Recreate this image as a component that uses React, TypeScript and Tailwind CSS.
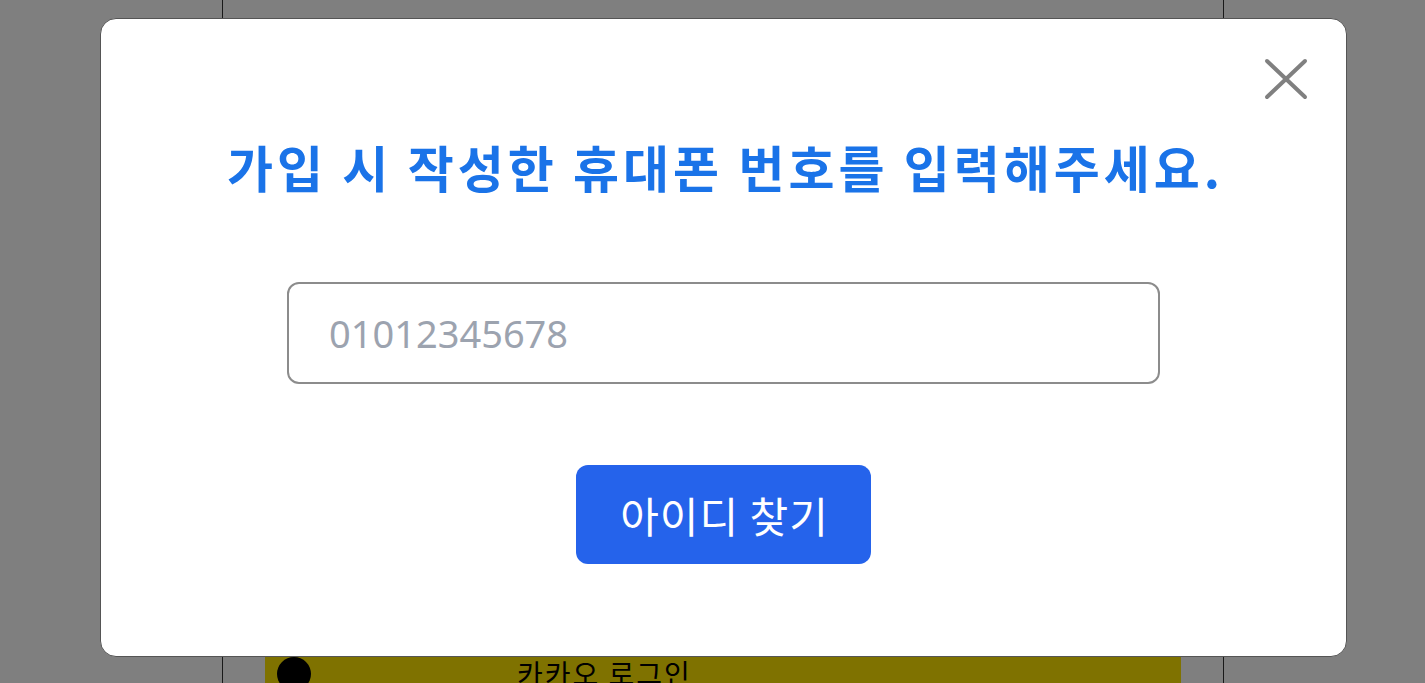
export default function App() {
  return (
    <div className="relative min-h-screen bg-white font-['Noto_Sans','Noto_Sans_CJK_KR',sans-serif]">
      {/* page behind the modal */}
      <div className="ml-[222px] w-[1002px] min-h-screen border-x border-[#333] pt-[656px] px-[42px]">
        <div className="relative flex h-[60px] items-start bg-[#fee500] pl-[252px]">
          <span className="absolute left-[12px] top-[1px] h-[34px] w-[34px] rounded-full bg-black" />
          <span className="mt-[-4px] text-[28px] tracking-[2px] font-['Noto_Sans_CJK_KR',sans-serif] text-black">카카오 로그인</span>
        </div>
      </div>

      <div className="fixed inset-0 bg-black/50" />

      {/* modal */}
      <div className="absolute left-[100px] top-[18px] flex h-[639px] w-[1247px] flex-col items-center rounded-2xl border border-[#555] bg-white">
        <button className="absolute right-[38px] top-[39px] p-0 text-[#808080]" aria-label="닫기">
          <svg width="44" height="44" viewBox="0 0 44 44" fill="none" stroke="currentColor" strokeWidth="4" strokeLinecap="round">
            <path d="M3 3 L41 39" />
            <path d="M41 3 L3 39" />
          </svg>
        </button>

        <h2 className="mt-[122px] pl-[4px] text-[50px] leading-none tracking-[4px] font-bold text-[#1a73e8] font-['Noto_Sans_CJK_KR',sans-serif]">
          가입 시 작성한 휴대폰 번호를 입력해주세요.
        </h2>

        <input
          type="text"
          placeholder="01012345678"
          className="mt-[91px] h-[102px] w-[873px] rounded-xl border-2 border-[#8c8c8c] pl-[40px] text-[38px] text-gray-700 placeholder:text-[#9ca3af] outline-none font-['Noto_Sans',sans-serif]"
        />

        <button className="mt-[81px] h-[99px] w-[295px] rounded-xl bg-[#2563eb] pl-[2px] text-[42px] tracking-[1px] text-white font-['Noto_Sans_CJK_KR',sans-serif]">
          아이디 찾기
        </button>
      </div>
    </div>
  );
}
